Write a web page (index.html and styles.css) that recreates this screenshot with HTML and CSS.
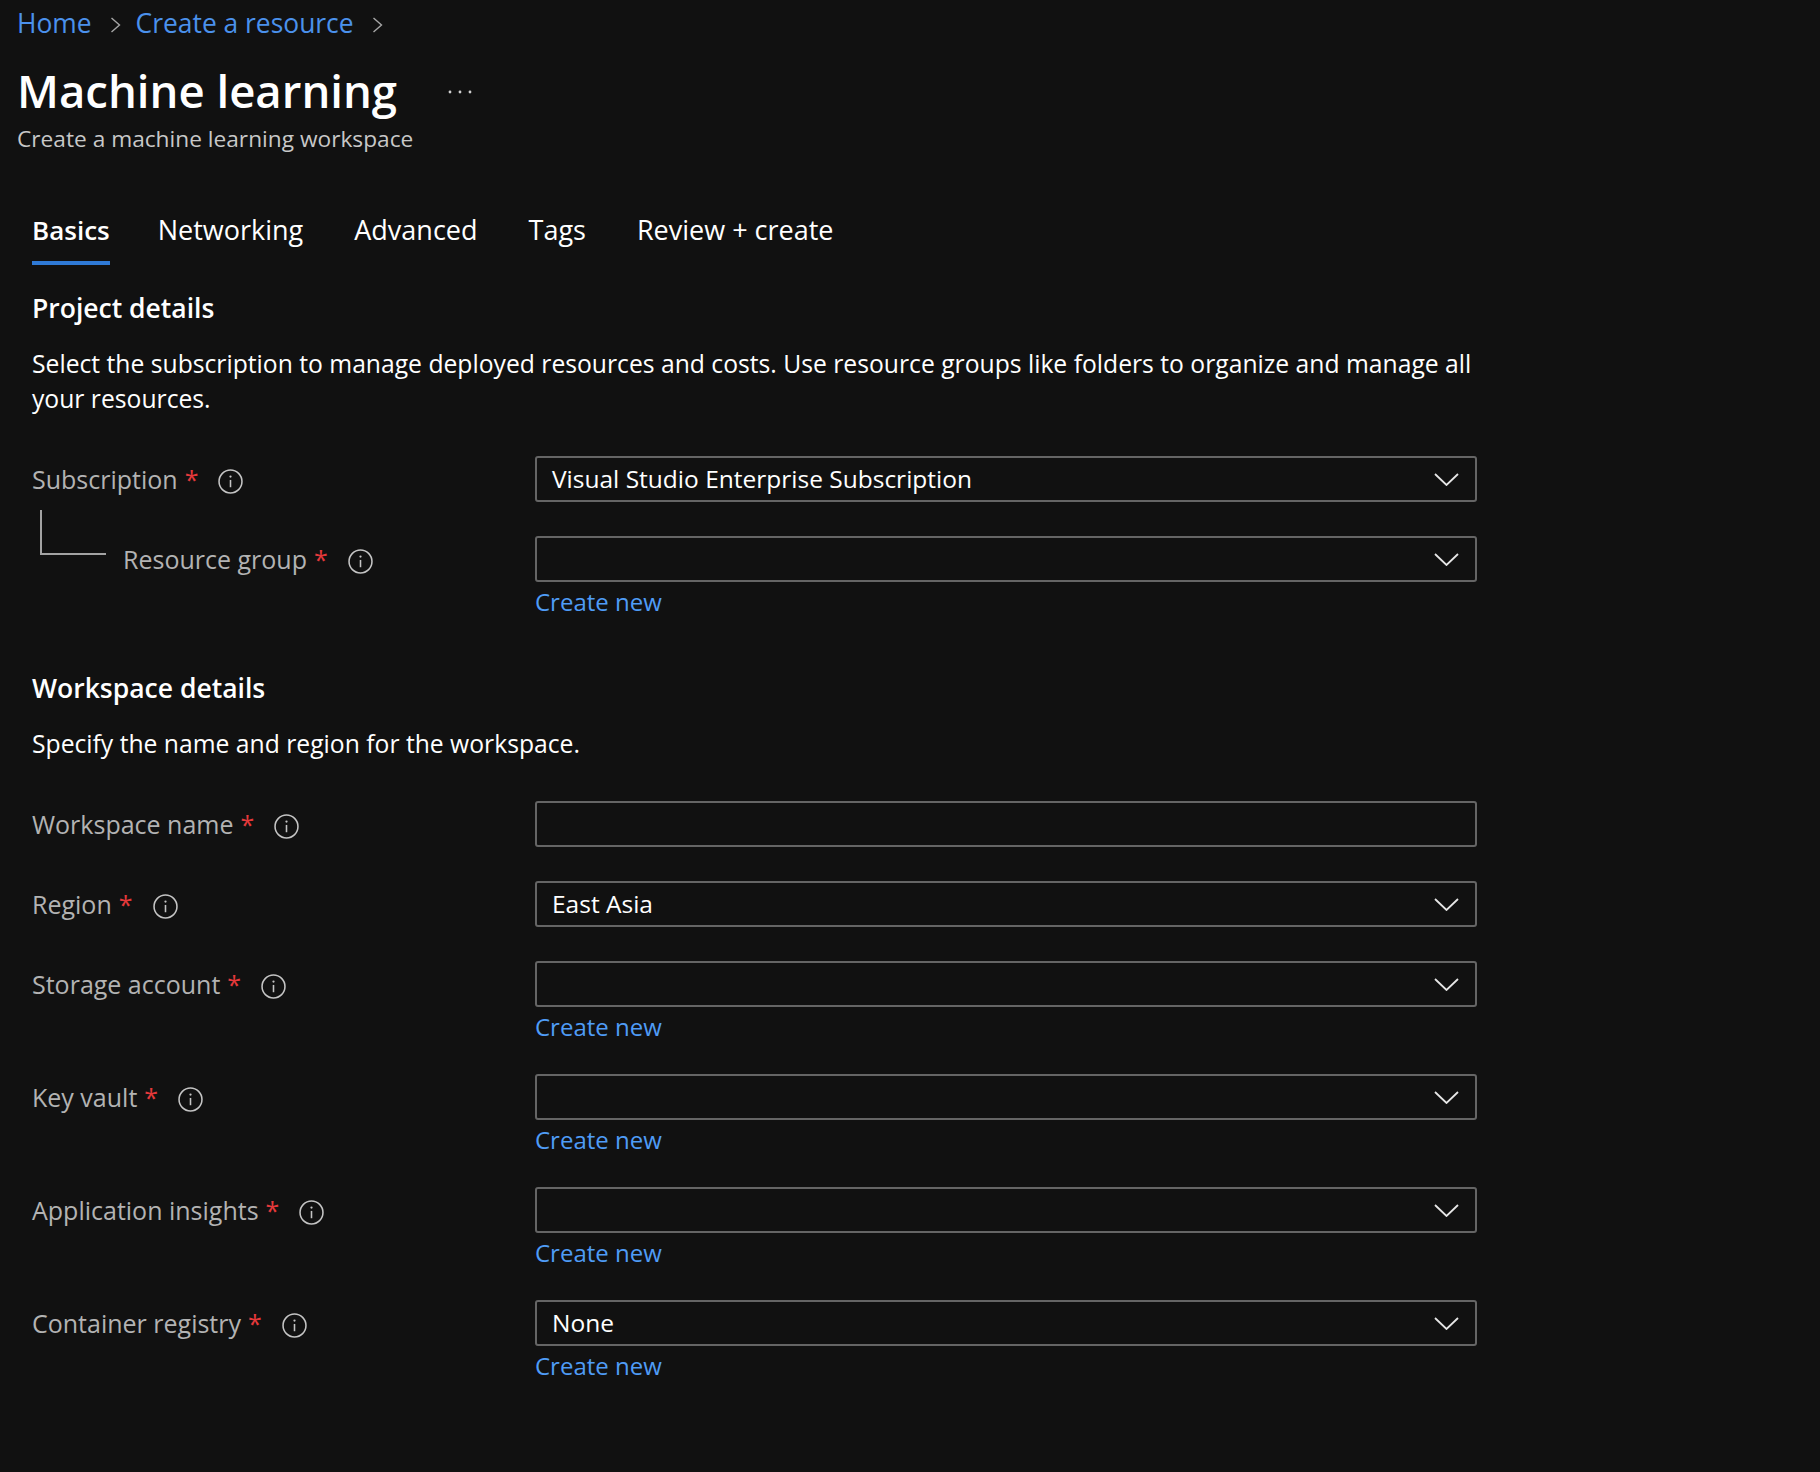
FILE: index.html
```html
<!DOCTYPE html>
<html lang="en">
<head>
<meta charset="utf-8">
<title>Machine learning - Create a machine learning workspace</title>
<link rel="stylesheet" href="styles.css">
</head>
<body>
<div class="page">
  <header class="header">
    <nav class="breadcrumb">
      <a class="crumb">Home</a>
      <svg class="crumb-sep" viewBox="0 0 11 16" width="11" height="16"><polyline points="1.5,1 9.5,8 1.5,15"/></svg>
      <a class="crumb">Create a resource</a>
      <svg class="crumb-sep" viewBox="0 0 11 16" width="11" height="16"><polyline points="1.5,1 9.5,8 1.5,15"/></svg>
    </nav>
    <div class="title-row">
      <h1 class="title">Machine learning</h1>
      <svg class="more" viewBox="0 0 24 4" width="24" height="4"><circle cx="2" cy="2" r="1.4"/><circle cx="12" cy="2" r="1.4"/><circle cx="22" cy="2" r="1.4"/></svg>
    </div>
    <p class="subtitle">Create a machine learning workspace</p>
  </header>

  <main class="content">
    <div class="tabs">
      <span class="tab active">Basics</span>
      <span class="tab">Networking</span>
      <span class="tab">Advanced</span>
      <span class="tab">Tags</span>
      <span class="tab">Review + create</span>
    </div>

    <h2 class="section-title">Project details</h2>
    <p class="desc">Select the subscription to manage deployed resources and costs. Use resource groups like folders to organize and manage all your resources.</p>

    <div class="form">
      <div class="row">
        <div class="label"><span>Subscription</span><span class="req">*</span><svg class="info" viewBox="0 0 24 24"><circle cx="12" cy="12" r="11" class="ring"/><line x1="12" y1="10.5" x2="12" y2="17.5"/><circle cx="12" cy="7.3" r="1.1" class="dot"/></svg></div>
        <div class="control">
          <div class="select"><span class="value">Visual Studio Enterprise Subscription</span><svg class="chev" viewBox="0 0 25 13"><polyline points="1,1 12.5,12 24,1"/></svg></div>
        </div>
      </div>
      <div class="row link-row">
        <div class="label child"><span>Resource group</span><span class="req">*</span><svg class="info" viewBox="0 0 24 24"><circle cx="12" cy="12" r="11" class="ring"/><line x1="12" y1="10.5" x2="12" y2="17.5"/><circle cx="12" cy="7.3" r="1.1" class="dot"/></svg></div>
        <div class="control">
          <div class="select"><span class="value"></span><svg class="chev" viewBox="0 0 25 13"><polyline points="1,1 12.5,12 24,1"/></svg></div>
          <a class="create">Create new</a>
        </div>
      </div>
    </div>

    <h2 class="section-title second">Workspace details</h2>
    <p class="desc">Specify the name and region for the workspace.</p>

    <div class="form">
      <div class="row">
        <div class="label"><span>Workspace name</span><span class="req">*</span><svg class="info" viewBox="0 0 24 24"><circle cx="12" cy="12" r="11" class="ring"/><line x1="12" y1="10.5" x2="12" y2="17.5"/><circle cx="12" cy="7.3" r="1.1" class="dot"/></svg></div>
        <div class="control">
          <div class="select"><span class="value"></span></div>
        </div>
      </div>
      <div class="row">
        <div class="label"><span>Region</span><span class="req">*</span><svg class="info" viewBox="0 0 24 24"><circle cx="12" cy="12" r="11" class="ring"/><line x1="12" y1="10.5" x2="12" y2="17.5"/><circle cx="12" cy="7.3" r="1.1" class="dot"/></svg></div>
        <div class="control">
          <div class="select"><span class="value">East Asia</span><svg class="chev" viewBox="0 0 25 13"><polyline points="1,1 12.5,12 24,1"/></svg></div>
        </div>
      </div>
      <div class="row link-row">
        <div class="label"><span>Storage account</span><span class="req">*</span><svg class="info" viewBox="0 0 24 24"><circle cx="12" cy="12" r="11" class="ring"/><line x1="12" y1="10.5" x2="12" y2="17.5"/><circle cx="12" cy="7.3" r="1.1" class="dot"/></svg></div>
        <div class="control">
          <div class="select"><span class="value"></span><svg class="chev" viewBox="0 0 25 13"><polyline points="1,1 12.5,12 24,1"/></svg></div>
          <a class="create">Create new</a>
        </div>
      </div>
      <div class="row link-row">
        <div class="label"><span>Key vault</span><span class="req">*</span><svg class="info" viewBox="0 0 24 24"><circle cx="12" cy="12" r="11" class="ring"/><line x1="12" y1="10.5" x2="12" y2="17.5"/><circle cx="12" cy="7.3" r="1.1" class="dot"/></svg></div>
        <div class="control">
          <div class="select"><span class="value"></span><svg class="chev" viewBox="0 0 25 13"><polyline points="1,1 12.5,12 24,1"/></svg></div>
          <a class="create">Create new</a>
        </div>
      </div>
      <div class="row link-row">
        <div class="label"><span>Application insights</span><span class="req">*</span><svg class="info" viewBox="0 0 24 24"><circle cx="12" cy="12" r="11" class="ring"/><line x1="12" y1="10.5" x2="12" y2="17.5"/><circle cx="12" cy="7.3" r="1.1" class="dot"/></svg></div>
        <div class="control">
          <div class="select"><span class="value"></span><svg class="chev" viewBox="0 0 25 13"><polyline points="1,1 12.5,12 24,1"/></svg></div>
          <a class="create">Create new</a>
        </div>
      </div>
      <div class="row link-row">
        <div class="label"><span>Container registry</span><span class="req">*</span><svg class="info" viewBox="0 0 24 24"><circle cx="12" cy="12" r="11" class="ring"/><line x1="12" y1="10.5" x2="12" y2="17.5"/><circle cx="12" cy="7.3" r="1.1" class="dot"/></svg></div>
        <div class="control">
          <div class="select"><span class="value">None</span><svg class="chev" viewBox="0 0 25 13"><polyline points="1,1 12.5,12 24,1"/></svg></div>
          <a class="create">Create new</a>
        </div>
      </div>
    </div>
  </main>
</div>
</body>
</html>
```

FILE: styles.css
```css
html, body {
  margin: 0;
  padding: 0;
  background: #111111;
}

body {
  font-family: "Open Sans", "Noto Sans", sans-serif;
  color: #ffffff;
  min-height: 1472px;
}

.page {
  width: 1820px;
}

/* Header */
.header {
  padding: 5px 0 0 17px;
}

.breadcrumb {
  display: flex;
  align-items: center;
  height: 36px;
  font-size: 26.4px;
  line-height: 36px;
}

.crumb {
  color: #4b91ec;
  text-decoration: none;
}

.crumb-sep {
  fill: none;
  stroke: #a6a6a6;
  stroke-width: 1.4;
  margin: 4px 15px 0 18px;
}

.title-row {
  display: flex;
  align-items: flex-start;
  margin-top: 19px;
}

.title {
  margin: 0;
  font-size: 45.5px;
  line-height: 60px;
  font-weight: 600;
  color: #ffffff;
}

.more {
  fill: #cfcfcf;
  margin: 30px 0 0 51px;
}

.subtitle {
  margin: 4px 0 0 0;
  font-size: 22.7px;
  line-height: 30px;
  color: #c8c8c8;
}

/* Content */
.content {
  padding-left: 32px;
}

.tabs {
  display: flex;
  gap: 51px;
  margin-top: 58px;
}

.tab {
  font-size: 27px;
  line-height: 36px;
  padding-bottom: 13px;
  border-bottom: 4px solid transparent;
  color: #ffffff;
}

.tab.active {
  font-weight: 600;
  font-size: 26px;
  margin-right: -3px;
  border-bottom-color: #2f7ad6;
}

.section-title {
  margin: 25px 0 0 0;
  font-size: 26.5px;
  line-height: 36px;
  font-weight: 600;
}

.section-title.second {
  margin-top: 51px;
}

.desc {
  margin: 20px 0 0 0;
  font-size: 24.7px;
  line-height: 35px;
  max-width: 1465px;
}

.form {
  margin-top: 40px;
  width: 1445px;
}

.row {
  display: grid;
  grid-template-columns: 503px 942px;
  margin-bottom: 34px;
}

.row.link-row {
  margin-bottom: 30px;
}

.form .row:last-child {
  margin-bottom: 0;
}

.label {
  position: relative;
  display: flex;
  align-items: center;
  height: 46px;
  font-size: 25px;
  line-height: 46px;
  color: #b3b3b3;
}

.label.child {
  padding-left: 91px;
}

.label.child::before {
  content: "";
  position: absolute;
  left: 8px;
  top: -26px;
  width: 64px;
  height: 43px;
  border-left: 2px solid #a3a3a3;
  border-bottom: 2px solid #a3a3a3;
}

.req {
  color: #e5393b;
  margin-left: 7px;
}

.info {
  width: 25px;
  height: 25px;
  margin: 4px 0 0 20px;
  flex: none;
}

.info .ring {
  fill: none;
  stroke: #c4c4c4;
  stroke-width: 1.5;
}

.info line {
  stroke: #c4c4c4;
  stroke-width: 1.5;
}

.info .dot {
  fill: #c4c4c4;
}

.control {
  display: flex;
  flex-direction: column;
  align-items: flex-start;
}

.select {
  box-sizing: border-box;
  width: 942px;
  height: 46px;
  border: 2px solid #656565;
  border-radius: 3px;
  display: flex;
  align-items: center;
  justify-content: space-between;
  padding: 0 16px 0 15px;
  font-size: 24.5px;
  line-height: 42px;
  color: #ffffff;
}

.chev {
  width: 25px;
  height: 13px;
  fill: none;
  stroke: #e6e6e6;
  stroke-width: 1.8;
  flex: none;
}

.create {
  display: block;
  margin-top: 2px;
  font-size: 24px;
  line-height: 35px;
  color: #4f9cf6;
  text-decoration: none;
}
```
